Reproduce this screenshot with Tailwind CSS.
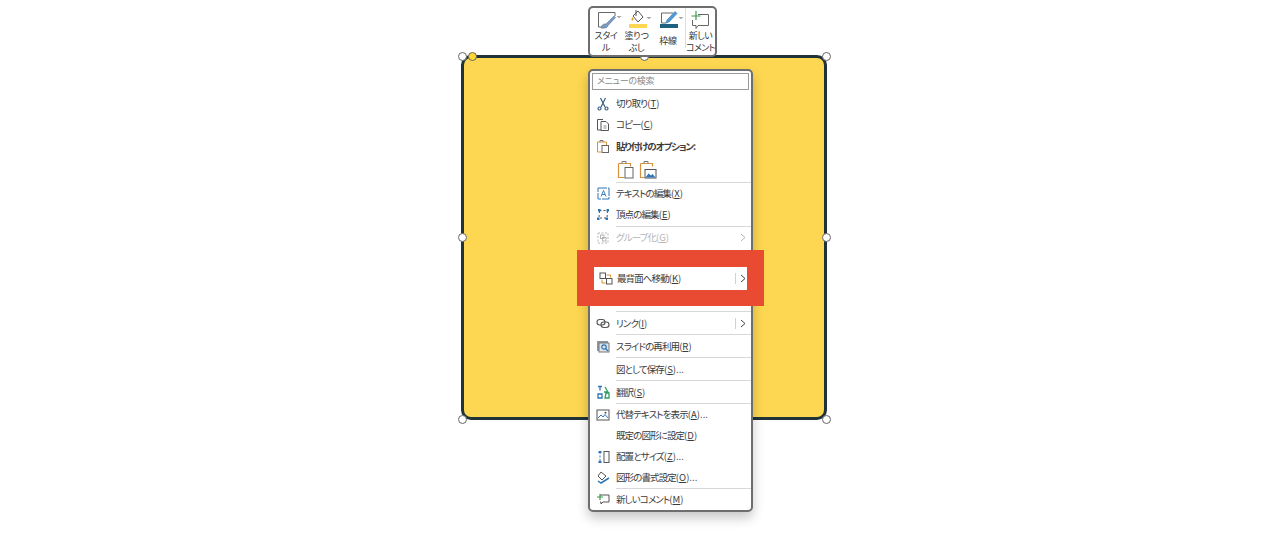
<!DOCTYPE html>
<html lang="ja">
<head>
<meta charset="utf-8">
<script src="https://cdn.jsdelivr.net/npm/@tailwindcss/browser@4"></script>
<title>図形のメニュー</title>
</head>
<body class="bg-white">
<div class="relative w-[1280px] h-[533px] overflow-hidden bg-white text-[#3a3a3a] [font-feature-settings:'palt'] font-['Noto_Sans_CJK_JP','Noto_Sans',sans-serif]">

  <!-- shape -->
  <div class="absolute left-[461px] top-[55px] w-[366px] h-[365px] bg-[#fdd751] border-[3px] border-[#1f3338] rounded-[10px]"></div>
  <div class="absolute left-[458px] top-[52px] w-[9px] h-[9px] rounded-full bg-white border border-[#666]"></div>
  <div class="absolute left-[822px] top-[52px] w-[9px] h-[9px] rounded-full bg-white border border-[#666]"></div>
  <div class="absolute left-[458px] top-[233px] w-[9px] h-[9px] rounded-full bg-white border border-[#666]"></div>
  <div class="absolute left-[822px] top-[233px] w-[9px] h-[9px] rounded-full bg-white border border-[#666]"></div>
  <div class="absolute left-[458px] top-[415px] w-[9px] h-[9px] rounded-full bg-white border border-[#666]"></div>
  <div class="absolute left-[822px] top-[415px] w-[9px] h-[9px] rounded-full bg-white border border-[#666]"></div>
  <div class="absolute left-[640px] top-[52px] w-[9px] h-[9px] rounded-full bg-white border border-[#666]"></div>
  <div class="absolute left-[468px] top-[52px] w-[9px] h-[9px] rounded-full bg-[#fdd835] border border-[#666]"></div>

  <!-- mini toolbar -->
  <div class="absolute left-[588px] top-[6px] w-[129px] h-[51px] flex bg-white border-2 border-[#6e6e6e] rounded-[5px] text-[9px] leading-[12px] tracking-[-0.3px] text-center text-[#333] whitespace-nowrap">
    <div class="w-[32px] shrink-0 flex flex-col items-center pt-px">
      <svg class="shrink-0" width="32" height="20" viewBox="0 0 32 20" fill="none"><path d="M25 7V3.500H8.500V18H14" stroke="#666"/><path d="M11 19c1-4 3-4 5-4L24 7l1.500 1.500L18 16.500c0 2-3 3-7 2.500z" fill="#7d9cc0" stroke="#4f6f97" stroke-width=".6"/><path d="M27.500 7l1.500 1.500L30.500 7" stroke="#555"/></svg>
      <div class="mt-px">スタイ<br>ル</div>
    </div>
    <div class="w-[29px] shrink-0 flex flex-col items-center pt-px">
      <svg class="shrink-0" width="29" height="20" viewBox="0 0 29 20" fill="none"><path d="M11 7l5-5 5 6-5 5z" stroke="#555" fill="#fff"/><path d="M14 1v6" stroke="#555"/><path d="M10.500 8c-1.500 2-1.500 3.500 0 3.500s1.500-1.500 0-3.500z" fill="#e0a020"/><rect x="7" y="15" width="18" height="4" fill="#fdd751"/><path d="M25.500 8l1.500 1.500L28.500 8" stroke="#555"/></svg>
      <div class="mt-px">塗りつ<br>ぶし</div>
    </div>
    <div class="w-[34px] shrink-0 flex flex-col items-center pt-px">
      <svg class="shrink-0" width="34" height="20" viewBox="0 0 34 20" fill="none"><path d="M22 4H10.500v10H15" stroke="#666"/><path d="M15 14l1-3 8-8.500 2 2-8 8.500z" fill="#4f9bd9" stroke="#2e75b6" stroke-width=".6"/><rect x="9" y="15" width="18" height="4" fill="#1f5f7f"/><path d="M28.500 8l1.500 1.500L31.500 8" stroke="#555"/></svg>
      <div class="mt-[6px]">枠線</div>
    </div>
    <div class="w-px h-[40px] shrink-0 bg-[#ddd]"></div>
    <div class="flex-1 flex flex-col items-center pt-px tracking-[-0.6px]">
      <svg class="shrink-0" width="29" height="20" viewBox="0 0 29 20" fill="none"><path d="M12 5.500h10.500v11H12l-2 3v-3H6.500V11" stroke="#666"/><path d="M10 2v9M5.500 7h9" stroke="#3c9a4a" stroke-width="1.200"/></svg>
      <div class="mt-px">新しい<br>コメント</div>
    </div>
  </div>

  <!-- context menu -->
  <div class="absolute left-[588px] top-[69px] w-[165px] h-[443px] bg-white border-2 border-[#6e6e6e] rounded-[5px] shadow-[0_6px_12px_rgba(0,0,0,0.22)] text-[9.5px] tracking-[-0.9px] text-[#3a3a3a]">
    <div class="mx-[2px] mt-[2px] h-[17px] border border-[#9a9a9a] px-1 text-[9px] tracking-[-0.3px] leading-[14px] text-[#8a8a8a]">メニューの検索</div>

    <div class="mt-[2px] h-[21px] pt-[2px] flex items-center">
      <div class="w-[26px] flex justify-center"><svg width="14" height="14" viewBox="0 0 14 14" fill="none" stroke="#3d5f85" stroke-width="1.200"><path d="M4.500 1l4.500 9M9.500 1L5 10"/><circle cx="3.500" cy="11.500" r="1.500"/><circle cx="10.500" cy="11.500" r="1.500"/></svg></div>
      <span>切り取り<span class="tracking-normal">(<u>T</u>)</span></span>
    </div>
    <div class="h-[21px] pt-[2px] flex items-center">
      <div class="w-[26px] flex justify-center"><svg width="14" height="14" viewBox="0 0 14 14" fill="none" stroke="#555"><path d="M5 12H1.500V1.500H7"/><path d="M5 3.500h5l2.500 2.500v6.500H5z" fill="#fff"/><path d="M7.500 8h3M7.500 10h3" stroke="#888"/></svg></div>
      <span>コピー<span class="tracking-normal">(<u>C</u>)</span></span>
    </div>
    <div class="h-[22px] pt-[2px] flex items-center">
      <div class="w-[26px] flex justify-center"><svg width="14" height="15" viewBox="0 0 14 15" fill="none"><path d="M5 13H1.500V3h9v3" stroke="#d9913c"/><path d="M4 3V1.500h3V3" stroke="#777"/><rect x="6" y="6.500" width="6.500" height="7" stroke="#666" fill="#fff"/></svg></div>
      <span class="font-bold tracking-[-1.100px]">貼り付けのオプション:</span>
    </div>
    <div class="h-[26px] flex items-center gap-[4px] pl-[27px]">
      <svg width="18" height="19" viewBox="0 0 18 19" fill="none"><path d="M1.500 3.500h12v3M1.500 3.500v14h6" stroke="#d9913c" stroke-width="1.200"/><path d="M5 3.500V1.500h4v2" stroke="#777"/><rect x="8" y="7.500" width="8" height="10.500" stroke="#666" fill="#fff"/></svg>
      <svg width="18" height="19" viewBox="0 0 18 19" fill="none"><path d="M1.500 3.500h12v3M1.500 3.500v14h4" stroke="#d9913c" stroke-width="1.200"/><path d="M5 3.500V1.500h4v2" stroke="#777"/><rect x="6" y="9.500" width="11" height="8.500" stroke="#555" fill="#fff"/><path d="M6.500 17.500l3-4 2.500 2 1.500-1.500 3 3.500z" fill="#2e75b6"/></svg>
    </div>
    <div class="ml-[26px] h-px bg-[#d8d8d8]"></div>

    <div class="h-[21px] flex items-center">
      <div class="w-[26px] flex justify-center"><svg width="13" height="13" viewBox="0 0 13 13" fill="none"><rect x="1" y="1" width="11" height="11" stroke="#2e75b6" stroke-dasharray="9 1"/><path d="M4 9.500l2.500-6 2.500 6M5 7.500h3" stroke="#2e75b6" stroke-width=".9"/></svg></div>
      <span>テキストの編集<span class="tracking-normal">(<u>X</u>)</span></span>
    </div>
    <div class="h-[21px] mb-px flex items-center">
      <div class="w-[26px] flex justify-center"><svg width="14" height="13" viewBox="0 0 14 13" fill="none"><path d="M3.500 2.500h8M11.500 3l-.5 7H3l.5-7" stroke="#555" stroke-dasharray="2 2"/><path d="M2 1h2.500v2.500H2zM10.500 1H13v2.500h-2.500zM1 9.500h2.500V12H1zM9.500 9.500H12V12H9.500z" fill="#2e75b6"/></svg></div>
      <span>頂点の編集<span class="tracking-normal">(<u>E</u>)</span></span>
    </div>
    <div class="ml-[26px] h-px bg-[#d8d8d8]"></div>

    <div class="h-[21px] flex items-center text-[#b5b5b5]">
      <div class="w-[26px] flex justify-center"><svg width="14" height="14" viewBox="0 0 14 14" fill="none" stroke="#b5b5b5"><rect x="2" y="2" width="10" height="10" stroke-dasharray="2 1.500"/><rect x="4.500" y="4" width="3.500" height="3.500"/><rect x="6.500" y="6.500" width="3.500" height="3.500"/></svg></div>
      <span>グループ化<span class="tracking-normal">(<u>G</u>)</span></span>
      <svg class="ml-auto mr-[5px]" width="6" height="9" viewBox="0 0 6 9" fill="none" stroke="#b5b5b5"><path d="M1 1l4 3.500-4 3.500"/></svg>
    </div>

    <!-- row under the red highlight -->
    <div class="h-[63px]"></div>
    <div class="ml-[26px] h-px bg-[#d8d8d8]"></div>

    <div class="h-[22px] flex items-center">
      <div class="w-[26px] flex justify-center"><svg width="14" height="11" viewBox="0 0 14 11" fill="none" stroke="#555" stroke-width="1.100"><rect x="1" y="1.500" width="8" height="5.500" rx="2.700"/><rect x="5" y="4" width="8" height="5.500" rx="2.700"/></svg></div>
      <span>リンク<span class="tracking-normal">(<u>I</u>)</span></span>
      <span class="ml-auto w-px h-[11px] bg-[#d0d0d0]"></span>
      <svg class="ml-[4px] mr-[5px]" width="6" height="9" viewBox="0 0 6 9" fill="none" stroke="#444"><path d="M1 1l4 3.500-4 3.500"/></svg>
    </div>
    <div class="ml-[26px] h-px bg-[#d8d8d8]"></div>

    <div class="h-[22px] flex items-center">
      <div class="w-[26px] flex justify-center"><svg width="14" height="13" viewBox="0 0 14 13" fill="none"><rect x="1" y="1" width="11" height="10" fill="#8a9aa5"/><rect x="3" y="3" width="10" height="9" fill="#dfe6ea" stroke="#777"/><circle cx="8" cy="7" r="2.200" stroke="#2e75b6" stroke-width="1.200"/><path d="M9.500 8.500l2.500 2.500" stroke="#2e75b6" stroke-width="1.200"/></svg></div>
      <span>スライドの再利用<span class="tracking-normal">(<u>R</u>)</span></span>
    </div>
    <div class="ml-[26px] h-px bg-[#d8d8d8]"></div>

    <div class="h-[22px] flex items-center pl-[26px]"><span>図として保存<span class="tracking-normal">(<u>S</u>)...</span></span></div>
    <div class="ml-[26px] h-px bg-[#d8d8d8]"></div>

    <div class="h-[22px] flex items-center">
      <div class="w-[26px] flex justify-center"><svg width="13" height="14" viewBox="0 0 13 14" fill="none"><path d="M1 1.500h4M3 1.500v4M1 9h4v4H1z" stroke="#2e75b6" stroke-width="1.300"/><path d="M8 2l3 5H7M9 8h3v5H8z" stroke="#2f9e5b" stroke-width="1.300"/></svg></div>
      <span>翻訳<span class="tracking-normal">(<u>S</u>)</span></span>
    </div>
    <div class="ml-[26px] h-px bg-[#d8d8d8]"></div>

    <div class="h-[21px] flex items-center">
      <div class="w-[26px] flex justify-center"><svg width="14" height="12" viewBox="0 0 14 12" fill="none"><rect x="1" y="1" width="12" height="10" stroke="#555"/><path d="M2 9l3-3 2 2 2-2.500L12 9" stroke="#2e75b6"/><circle cx="9.500" cy="3.700" r="1" fill="#555"/></svg></div>
      <span>代替テキストを表示<span class="tracking-normal">(<u>A</u>)...</span></span>
    </div>
    <div class="h-[21px] flex items-center pl-[26px]"><span>既定の図形に設定<span class="tracking-normal">(<u>D</u>)</span></span></div>
    <div class="h-[21px] flex items-center">
      <div class="w-[26px] flex justify-center"><svg width="13" height="14" viewBox="0 0 13 14" fill="none"><rect x="7" y="1.500" width="5" height="11" stroke="#555"/><path d="M3 2v10" stroke="#2e75b6" stroke-dasharray="2 1.500"/><path d="M1.500 1h3v2h-3zM1.500 11h3v2h-3z" fill="#2e75b6"/></svg></div>
      <span>配置とサイズ<span class="tracking-normal">(<u>Z</u>)...</span></span>
    </div>
    <div class="h-[21px] flex items-center">
      <div class="w-[26px] flex justify-center"><svg width="14" height="13" viewBox="0 0 14 13" fill="none"><path d="M5 1l5 4-4 4-4-4z" stroke="#555" fill="#fff"/><path d="M2 10l3 2 8-5" stroke="#2e75b6" stroke-width="1.500"/></svg></div>
      <span>図形の書式設定<span class="tracking-normal">(<u>O</u>)...</span></span>
    </div>
    <div class="ml-[26px] h-px bg-[#d8d8d8]"></div>

    <div class="h-[22px] pb-px flex items-center">
      <div class="w-[26px] flex justify-center"><svg width="14" height="13" viewBox="0 0 14 13" fill="none"><path d="M4 2h9v7H7l-2 2V9H4" stroke="#555" fill="#fff"/><path d="M4 1v6M1 4h6" stroke="#3c9a4a" stroke-width="1.200"/></svg></div>
      <span>新しいコメント<span class="tracking-normal">(<u>M</u>)</span></span>
    </div>
  </div>

  <!-- red highlight around the menu row -->
  <div class="absolute left-[577px] top-[250px] w-[187px] h-[56px] bg-[#e84b32] flex items-center px-[17px]">
    <div class="w-full h-[23px] mt-[1px] bg-white flex items-center text-[9.5px] tracking-[-0.9px] text-[#3a3a3a]">
      <div class="w-[23px] flex justify-center"><svg width="14" height="13" viewBox="0 0 14 13" fill="none"><rect x="1" y="1" width="5.500" height="5.500" stroke="#555"/><rect x="7.500" y="6.500" width="5.500" height="5.500" stroke="#555"/><path d="M7.500 3h4v2.500M3 7.500V11h3.500" stroke="#d9913c"/></svg></div>
      <span>最背面へ移動<span class="tracking-normal">(<u>K</u>)</span></span>
      <span class="ml-auto w-px h-[11px] bg-[#d0d0d0]"></span>
      <svg class="ml-[4px] mr-[1px]" width="6" height="9" viewBox="0 0 6 9" fill="none" stroke="#444"><path d="M1 1l4 3.500-4 3.500"/></svg>
    </div>
  </div>
</div>
</body>
</html>
